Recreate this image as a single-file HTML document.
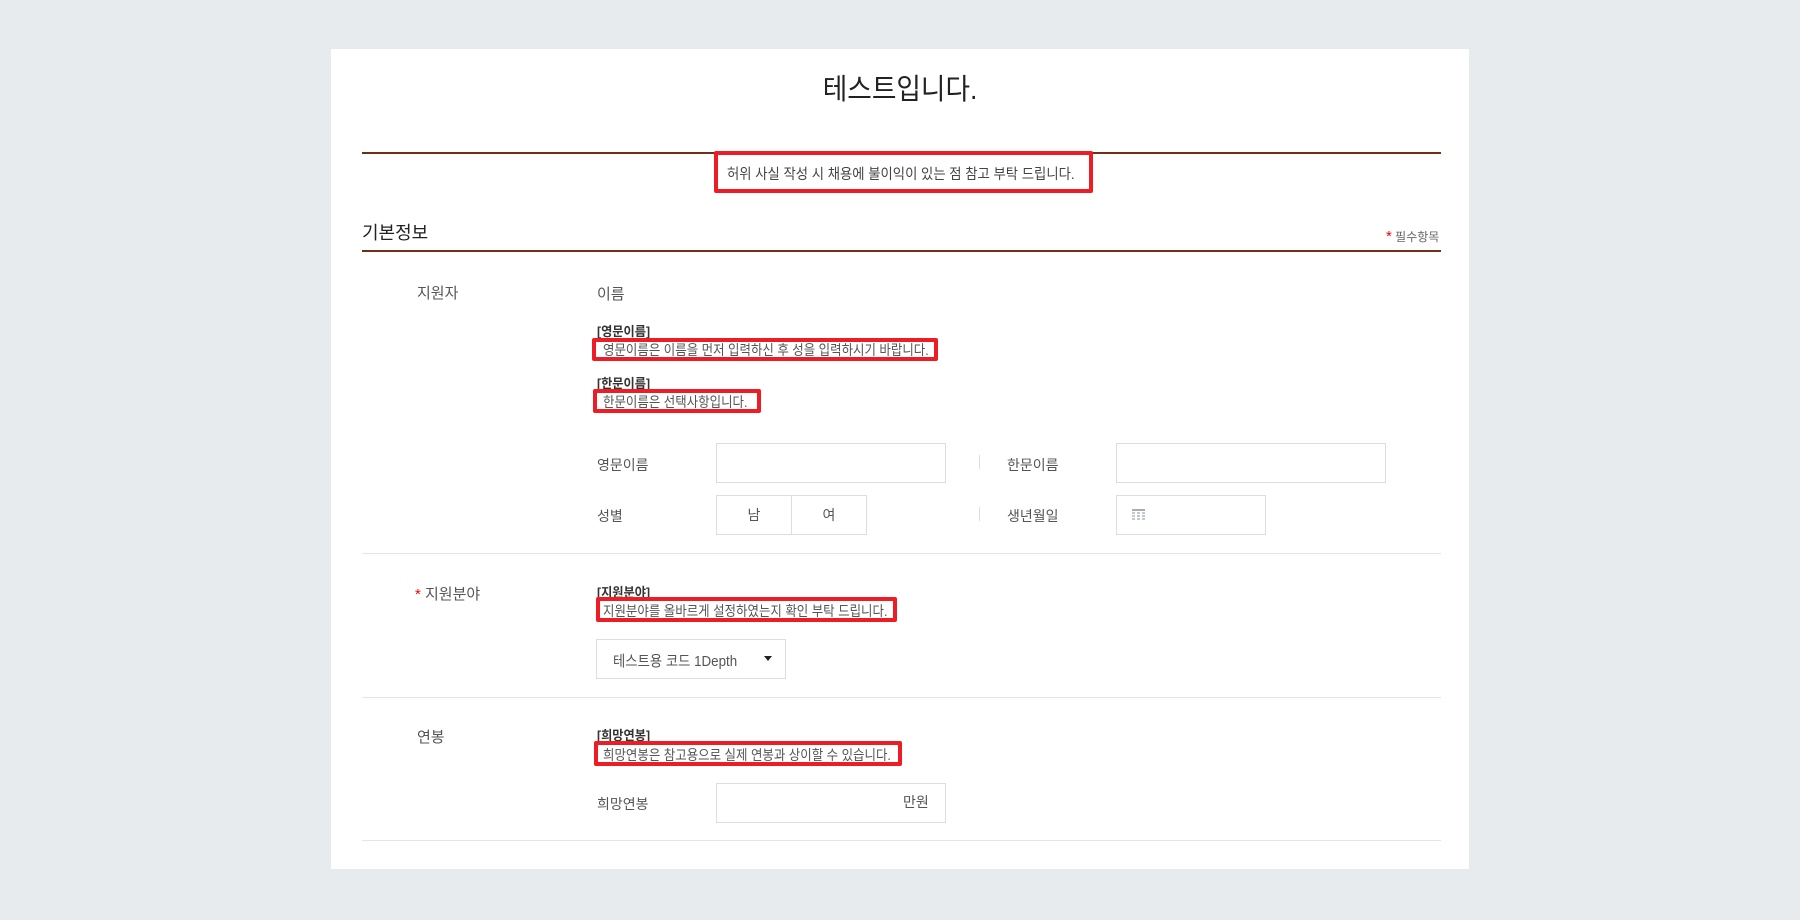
<!DOCTYPE html>
<html><head><meta charset="utf-8"><style>
*{margin:0;padding:0;box-sizing:border-box}
body{width:1800px;height:920px;background:#e8ebee;font-family:"Liberation Sans","Noto Sans CJK KR",sans-serif;color:#555;position:relative;overflow:hidden}
.p{position:absolute;left:331px;top:49px;width:1138px;height:820px;background:#fff}
.a{position:absolute;white-space:nowrap}
.red{position:absolute;border:4px solid #ee1c25;border-radius:2px}
.line{position:absolute;left:362px;width:1079px}
.inp{position:absolute;border:1px solid #ddd;background:#fff}
.t{font-size:15px;color:#555}
.b{font-size:13px;font-weight:bold;color:#333;transform:scaleX(.94);transform-origin:left}
.m{font-size:14px;color:#555}
.n{transform:scaleX(.89);transform-origin:left}
</style></head><body>
<div class="p"></div>
<div class="a" style="left:0;width:1800px;text-align:center;top:66px;font-size:29px;color:#222"><span style="display:inline-block;transform:scaleX(.92)">테스트입니다.</span></div>
<div class="line" style="top:152px;height:2px;background:#6b3214"></div>
<div class="red" style="left:714px;top:151px;width:379px;height:42px;background:#fff"></div>
<div class="a" style="left:727px;top:163px;font-size:14.5px;color:#444;transform:scaleX(.92);transform-origin:left">허위 사실 작성 시 채용에 불이익이 있는 점 참고 부탁 드립니다.</div>
<div class="a" style="left:362px;top:219px;font-size:18px;color:#222">기본정보</div>
<div class="a" style="left:1386px;top:228px;font-size:12px;color:#666"><span style="color:#e00;font-size:15px">*</span> 필수항목</div>
<div class="line" style="top:250px;height:2px;background:#6b3214"></div>
<div class="a t" style="left:417px;top:282px">지원자</div>
<div class="a t" style="left:597px;top:283px">이름</div>
<div class="a b" style="left:597px;top:321px">[영문이름]</div>
<div class="red" style="left:592px;top:338px;width:346px;height:23px"></div>
<div class="a m n" style="left:603px;top:340px">영문이름은 이름을 먼저 입력하신 후 성을 입력하시기 바랍니다.</div>
<div class="a b" style="left:597px;top:373px">[한문이름]</div>
<div class="red" style="left:593px;top:389px;width:168px;height:24px"></div>
<div class="a m n" style="left:603px;top:392px">한문이름은 선택사항입니다.</div>
<div class="a m" style="left:597px;top:455px">영문이름</div>
<div class="inp" style="left:716px;top:443px;width:230px;height:40px"></div>
<div class="a" style="left:979px;top:455px;width:1px;height:14px;background:#ddd"></div>
<div class="a m" style="left:1007px;top:455px">한문이름</div>
<div class="inp" style="left:1116px;top:443px;width:270px;height:40px"></div>
<div class="a m" style="left:597px;top:506px">성별</div>
<div class="inp" style="left:716px;top:495px;width:76px;height:40px;text-align:center;line-height:38px;font-size:14px">남</div>
<div class="inp" style="left:791px;top:495px;width:76px;height:40px;text-align:center;line-height:38px;font-size:14px">여</div>
<div class="a" style="left:979px;top:507px;width:1px;height:14px;background:#ddd"></div>
<div class="a m" style="left:1007px;top:506px">생년월일</div>
<div class="inp" style="left:1116px;top:495px;width:150px;height:40px"></div>
<svg class="a" style="left:1132px;top:509px" width="13" height="12" viewBox="0 0 13 12"><rect x="0" y="0" width="13" height="2" fill="#aab"/><g fill="#c4c8d0"><rect x="0" y="3" width="3" height="2"/><rect x="5" y="3" width="3" height="2"/><rect x="10" y="3" width="3" height="2"/><rect x="0" y="6" width="3" height="2"/><rect x="5" y="6" width="3" height="2"/><rect x="10" y="6" width="3" height="2"/><rect x="0" y="9" width="3" height="2"/><rect x="5" y="9" width="3" height="2"/><rect x="10" y="9" width="3" height="2"/></g></svg>
<div class="line" style="top:553px;height:1px;background:#e5e5e5"></div>
<div class="a t" style="left:415px;top:583px"><span style="color:#e00">*</span> 지원분야</div>
<div class="a b" style="left:597px;top:582px">[지원분야]</div>
<div class="red" style="left:596px;top:597px;width:301px;height:25px"></div>
<div class="a m n" style="left:603px;top:601px">지원분야를 올바르게 설정하였는지 확인 부탁 드립니다.</div>
<div class="inp" style="left:596px;top:639px;width:190px;height:40px"></div>
<div class="a n" style="left:613px;top:650px;font-size:15px;color:#555">테스트용 코드 1Depth</div>
<div class="a" style="left:764px;top:656px;width:0;height:0;border-left:4px solid transparent;border-right:4px solid transparent;border-top:5px solid #222"></div>
<div class="line" style="top:697px;height:1px;background:#e5e5e5"></div>
<div class="a t" style="left:417px;top:726px">연봉</div>
<div class="a b" style="left:597px;top:725px">[희망연봉]</div>
<div class="red" style="left:594px;top:741px;width:308px;height:25px"></div>
<div class="a m n" style="left:603px;top:745px">희망연봉은 참고용으로 실제 연봉과 상이할 수 있습니다.</div>
<div class="a m" style="left:597px;top:794px">희망연봉</div>
<div class="inp" style="left:716px;top:783px;width:230px;height:40px"></div>
<div class="a m" style="left:903px;top:792px">만원</div>
<div class="line" style="top:840px;height:1px;background:#e5e5e5"></div>
</body></html>
